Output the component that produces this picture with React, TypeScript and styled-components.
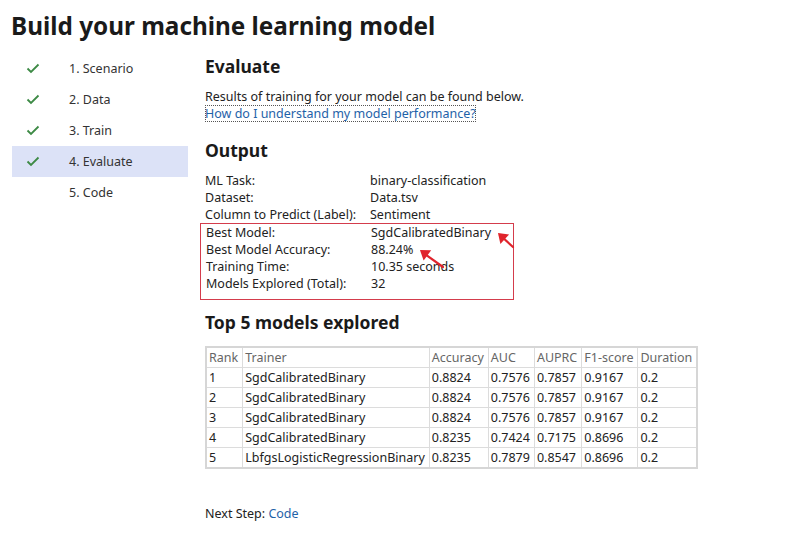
import React from 'react';
import styled, { createGlobalStyle } from 'styled-components';

const GlobalStyle = createGlobalStyle`
  html, body {
    margin: 0;
    padding: 0;
    background: #fff;
  }
  body {
    font-family: 'Noto Sans', 'Open Sans', sans-serif;
    font-size: 12.5px;
    color: #222;
  }
`;

const Page = styled.div`
  padding: 8px 0 0 11px;
  width: 797px;
  height: 537px;
  box-sizing: border-box;
`;

const Title = styled.h1`
  margin: 0 0 8px 0;
  font-size: 24.3px;
  font-weight: 700;
  line-height: 36px;
  color: #1a1a1a;
`;

const Body = styled.div`
  display: flex;
  gap: 17px;
`;

const Sidebar = styled.ul`
  list-style: none;
  margin: 1px 0 0 1px;
  padding: 0;
  width: 176px;
`;

const Step = styled.li<{ active?: boolean }>`
  display: flex;
  align-items: center;
  height: 31px;
  background: ${p => (p.active ? '#dce2f7' : 'transparent')};
`;

const CheckSlot = styled.span`
  width: 57px;
  display: flex;
  justify-content: flex-start;
  padding-left: 14px;
  box-sizing: border-box;
`;

const StepLabel = styled.span`
  font-size: 12.5px;
  color: #333;
`;

const Main = styled.div`
  display: flex;
  flex-direction: column;
  padding-top: 2px;
`;

const Heading = styled.h2`
  margin: 0;
  font-size: 17.5px;
  font-weight: 700;
  line-height: 24px;
  color: #1a1a1a;
`;

const Text = styled.p`
  margin: 10px 0 0 0;
  line-height: 17px;
`;

const HelpLink = styled.a`
  color: #1f62a8;
  text-decoration: none;
  outline: 1px dotted #555;
  outline-offset: -1px;
  align-self: flex-start;
  line-height: 17px;
`;

const Section = styled.div<{ top: number }>`
  margin-top: ${p => p.top}px;
`;

const InfoGrid = styled.div`
  display: grid;
  grid-template-columns: 165px auto;
  line-height: 17px;
  margin-top: 10px;
`;

const Highlight = styled.div`
  position: relative;
  display: grid;
  grid-template-columns: 165px auto;
  grid-column: 1 / 3;
  margin-left: -5px;
  padding: 0 0 7px 5px;
  width: 307px;
  border: 1px solid #d43c4c;
`;

const Arrow = styled.svg<{ x: number; y: number }>`
  position: absolute;
  left: ${p => p.x}px;
  top: ${p => p.y}px;
  overflow: visible;
`;

const Table = styled.table`
  margin-top: 12px;
  border-collapse: collapse;
  border: 2px solid #d6d6d6;
  font-size: 12.5px;
  line-height: 19px;
`;

const Th = styled.th`
  font-weight: 400;
  text-align: left;
  color: #666;
  padding: 0 4px 0 2px;
  border: 1px solid #dcdcdc;
  white-space: nowrap;
`;

const Td = styled.td`
  padding: 0 4px 0 2px;
  border: 1px solid #dcdcdc;
  white-space: nowrap;
  color: #222;
`;

const NextStep = styled.p`
  margin: 36px 0 0 0;
  line-height: 17px;
`;

const CodeLink = styled.a`
  color: #1f62a8;
  text-decoration: none;
`;

const Check = () => (
  <svg width="14" height="11" viewBox="0 0 14 11">
    <path d="M1.5 5.5 L5 9 L12.5 1.5" fill="none" stroke="#3d8a45" strokeWidth="1.8" />
  </svg>
);

const RedArrow = ({ x, y, dx, dy }: { x: number; y: number; dx: number; dy: number }) => (
  <Arrow x={x} y={y} width="1" height="1">
    <path d={`M${dx} ${dy} L2 2`} stroke="#e0242c" strokeWidth="2.2" strokeLinecap="round" />
    <path
      d="M0 0 L11 2 L2 11 Z"
      fill="#e0242c"
      transform={`rotate(${(Math.atan2(dy, dx) * 180) / Math.PI - 45} 0 0)`}
    />
  </Arrow>
);

const steps = [
  { label: '1. Scenario', done: true },
  { label: '2. Data', done: true },
  { label: '3. Train', done: true },
  { label: '4. Evaluate', done: true, active: true },
  { label: '5. Code', done: false },
];

const info = [
  ['ML Task:', 'binary-classification'],
  ['Dataset:', 'Data.tsv'],
  ['Column to Predict (Label):', 'Sentiment'],
];

const best = [
  ['Best Model:', 'SgdCalibratedBinary'],
  ['Best Model Accuracy:', '88.24%'],
  ['Training Time:', '10.35 seconds'],
  ['Models Explored (Total):', '32'],
];

const models = [
  ['1', 'SgdCalibratedBinary', '0.8824', '0.7576', '0.7857', '0.9167', '0.2'],
  ['2', 'SgdCalibratedBinary', '0.8824', '0.7576', '0.7857', '0.9167', '0.2'],
  ['3', 'SgdCalibratedBinary', '0.8824', '0.7576', '0.7857', '0.9167', '0.2'],
  ['4', 'SgdCalibratedBinary', '0.8235', '0.7424', '0.7175', '0.8696', '0.2'],
  ['5', 'LbfgsLogisticRegressionBinary', '0.8235', '0.7879', '0.8547', '0.8696', '0.2'],
];

const headers = ['Rank', 'Trainer', 'Accuracy', 'AUC', 'AUPRC', 'F1-score', 'Duration'];

export default function App() {
  return (
    <>
      <GlobalStyle />
      <Page>
        <Title>Build your machine learning model</Title>
        <Body>
          <Sidebar>
            {steps.map(s => (
              <Step key={s.label} active={s.active}>
                <CheckSlot>{s.done && <Check />}</CheckSlot>
                <StepLabel>{s.label}</StepLabel>
              </Step>
            ))}
          </Sidebar>
          <Main>
            <Heading>Evaluate</Heading>
            <Text>Results of training for your model can be found below.</Text>
            <HelpLink href="#">How do I understand my model performance?</HelpLink>
            <Section top={16}>
              <Heading>Output</Heading>
              <InfoGrid>
                {info.map(([k, v]) => (
                  <React.Fragment key={k}>
                    <span>{k}</span>
                    <span>{v}</span>
                  </React.Fragment>
                ))}
                <Highlight>
                  {best.map(([k, v]) => (
                    <React.Fragment key={k}>
                      <span>{k}</span>
                      <span>{v}</span>
                    </React.Fragment>
                  ))}
                  <RedArrow x={297} y={9} dx={15} dy={14} />
                  <RedArrow x={219} y={26} dx={23} dy={17} />
                </Highlight>
              </InfoGrid>
            </Section>
            <Section top={10}>
              <Heading>Top 5 models explored</Heading>
            </Section>
            <Table>
              <thead>
                <tr>
                  {headers.map(h => (
                    <Th key={h}>{h}</Th>
                  ))}
                </tr>
              </thead>
              <tbody>
                {models.map(row => (
                  <tr key={row[0]}>
                    {row.map((c, i) => (
                      <Td key={i}>{c}</Td>
                    ))}
                  </tr>
                ))}
              </tbody>
            </Table>
            <NextStep>
              Next Step: <CodeLink href="#">Code</CodeLink>
            </NextStep>
          </Main>
        </Body>
      </Page>
    </>
  );
}
